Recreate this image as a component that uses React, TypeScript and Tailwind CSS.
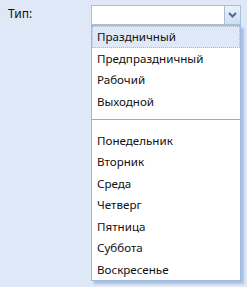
import React from "react";

const top = ["Праздничный", "Предпраздничный", "Рабочий", "Выходной"];
const days = ["Понедельник", "Вторник", "Среда", "Четверг", "Пятница", "Суббота", "Воскресенье"];

export default function App() {
  return (
    <div
      className="w-[247px] h-[287px] bg-[#dfe8f6] text-[11.6px] text-[#111] overflow-hidden"
      style={{ fontFamily: "'Noto Sans', 'Segoe UI', Tahoma, sans-serif" }}
    >
      <div className="flex items-start pt-[5px] pl-[8px]">
        <div className="w-[83px] h-[20px] leading-[18px] text-[12px]">Тип:</div>
        <div className="relative">
          <div className="flex w-[150px] h-[20px] border border-[#a9bfd6] bg-white">
            <div className="flex-1" />
            <div className="w-[16px] h-full border-l border-[#a9bfd6] bg-gradient-to-b from-[#eaf1fb] to-[#cfdef2] flex items-center justify-center">
              <svg width="9" height="6" viewBox="0 0 9 6">
                <path d="M1 1 L4.5 4.5 L8 1" stroke="#4d6a92" strokeWidth="2" fill="none" />
              </svg>
            </div>
          </div>
          <div className="absolute left-0 top-[20px] w-[150px] h-[256px] bg-white border border-[#99bbe8] shadow-[3px_3px_2px_rgba(120,140,180,0.45)]">
            {top.map((t, i) => (
              <div
                key={t}
                className={
                  "h-[21.5px] leading-[19.5px] pl-[4px] whitespace-nowrap " +
                  (i === 0
                    ? "bg-[#dfe8f6] border border-dotted border-[#a3bae9]"
                    : "border border-transparent")
                }
              >
                {t}
              </div>
            ))}
            <div className="h-[17.5px] flex items-center">
              <div className="w-full h-px bg-[#a8a8a8] mt-[-3px]" />
            </div>
            {days.map((t) => (
              <div key={t} className="h-[21.5px] leading-[19.5px] pl-[4px] border border-transparent whitespace-nowrap">
                {t}
              </div>
            ))}
          </div>
        </div>
      </div>
    </div>
  );
}
